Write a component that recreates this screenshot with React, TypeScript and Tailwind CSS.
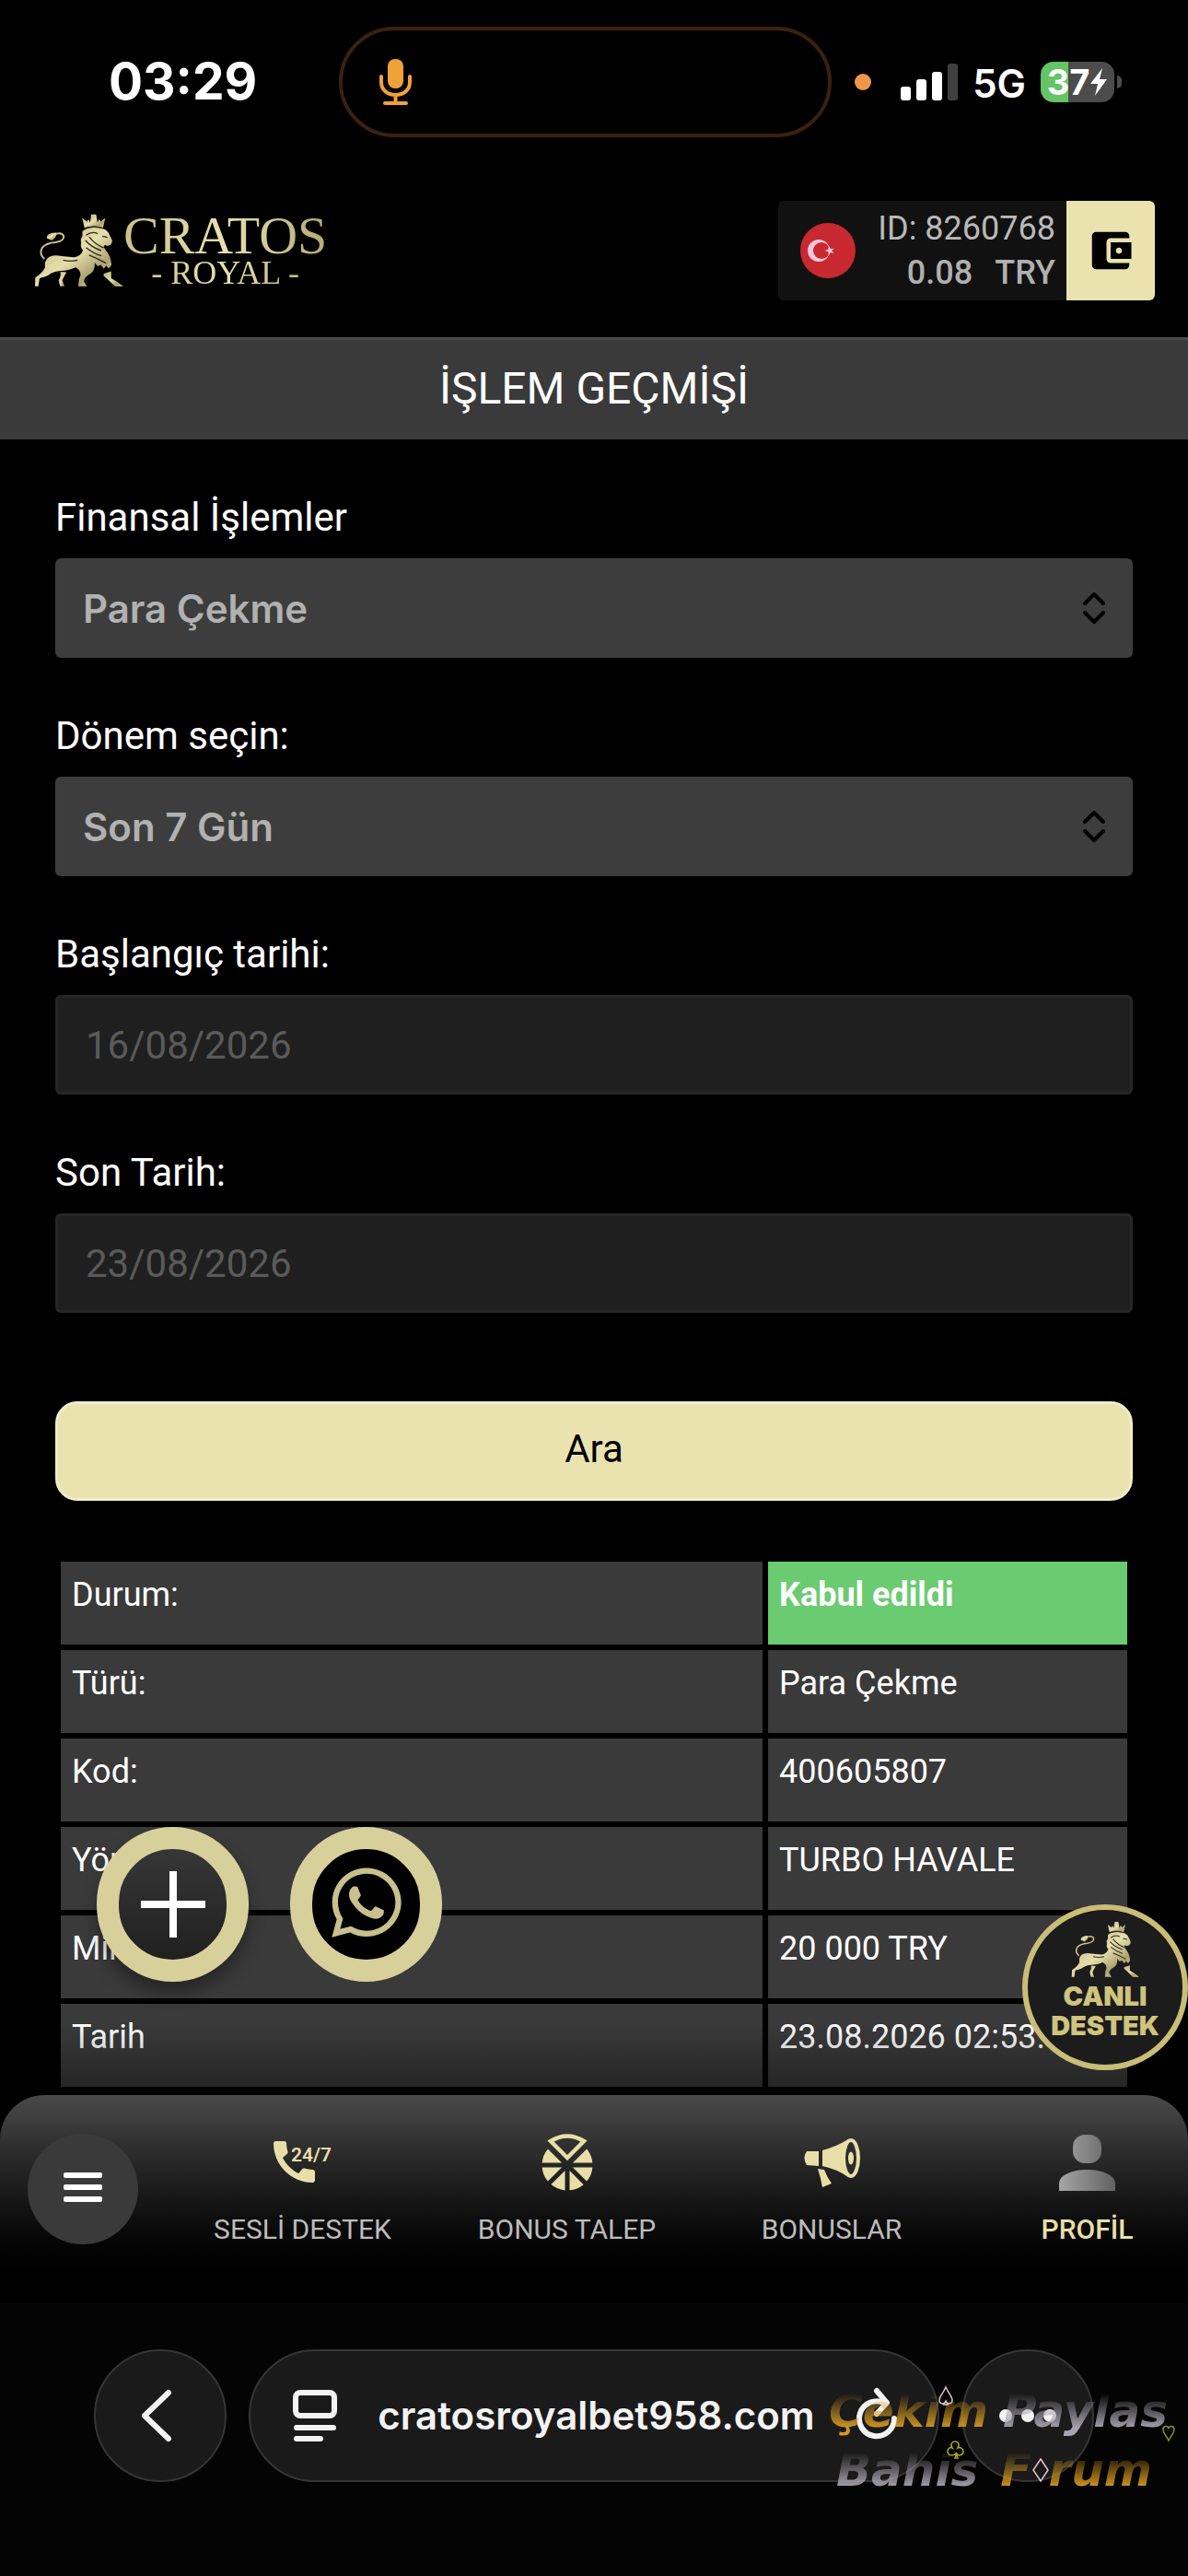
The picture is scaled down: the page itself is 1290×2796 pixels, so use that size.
import React, { useState } from 'react';
import { FaWhatsapp } from 'react-icons/fa';
import { MdAccountBalanceWallet } from 'react-icons/md';

const rows = [
  { label: 'Durum:', value: 'Kabul edildi', accepted: true },
  { label: 'Türü:', value: 'Para Çekme' },
  { label: 'Kod:', value: '400605807' },
  { label: 'Yöntem:', value: 'TURBO HAVALE' },
  { label: 'Miktar:', value: '20 000 TRY' },
  { label: 'Tarih', value: '23.08.2026 02:53.12' },
];

function Lion({ className, id }: { className: string; id: string }) {
  return (
    <svg viewBox="110 95 292 240" className={className} aria-hidden="true">
      <defs>
        <linearGradient id={id} x1="0" y1="0" x2="1" y2="1">
          <stop offset="0" stopColor="#b9b07c" />
          <stop offset="0.5" stopColor="#e6deab" />
          <stop offset="0.75" stopColor="#aba26f" />
          <stop offset="1" stopColor="#e9e1ae" />
        </linearGradient>
      </defs>
      <g fill={`url(#${id})`}>
        <path d="M275 141L267 108L283 120L288 113L293 123L297 97H313L317 123L323 112L328 120L343 108L335 141Q305 130 275 141Z" />
        <path d="M268 152Q285 138 312 140Q340 140 352 155L364 178Q368 186 360 196Q350 202 342 197Q333 199 345 215Q361 232 363 262L354 274L346 264L338 274L328 262L318 266L308 254Q311 280 292 292Q274 302 273 316L283 332H255Q254 310 262 295Q262 278 246 270Q222 281 197 281Q180 281 166 289Q150 302 128 305L124 332H113L114 303Q138 288 146 270Q142 246 160 235Q178 228 200 233L240 237Q262 234 270 214Q260 205 264 190Q260 178 268 168Z" />
        <path d="M196 284L216 286Q206 302 202 312L209 332H195L190 312Q199 298 196 284Z" />
        <path d="M338 290L362 283L362 305Q386 318 401 332H374Q357 314 337 297Z" />
        <path d="M151 174Q152 156 182 156Q188 168 168 182Q158 176 151 174Z" />
      </g>
      <path d="M144 242Q125 226 137 205Q150 190 180 188Q208 184 207 168Q202 155 182 160" fill="none" stroke="#c9c08c" strokeWidth="6" />
      <path d="M275 142Q305 134 335 142M280 165Q300 150 318 160M278 182Q298 205 330 215M290 170Q310 195 338 206M280 205Q305 225 330 232M290 230Q315 240 345 256M333 168L350 172M205 246Q230 252 252 246" fill="none" stroke="#2c2a1c" strokeWidth="4" />
    </svg>
  );
}

function StatusBar() {
  return (
    <div className="relative flex h-[178px] items-start justify-between pr-[72px] pl-[118px] text-white">
      <span className="pt-[56px] font-[Inter] text-[55px] leading-[64px] font-bold">03:29</span>
      <div className="absolute inset-x-0 top-[29px] mx-auto flex h-[120px] w-[535px] -translate-x-[10px] items-center rounded-full border-4 border-[#3a210e] pl-10">
        <svg viewBox="0 0 35 50" className="h-[50px] w-[35px]" fill="none" stroke="#f0a23a" strokeWidth="4" aria-hidden="true">
          <rect x="9" y="0" width="17" height="32" rx="8" fill="#f0a23a" stroke="none" />
          <path d="M2 19v6c0 9 7 14 15.500 14S33 34 33 25v-6M17.500 39v9M6 48h23" strokeLinecap="round" />
        </svg>
      </div>
      <div className="flex items-center pt-[65px]">
        <span className="mr-8 size-[18px] rounded-full bg-[#ef9748]" />
        <svg viewBox="0 0 62 40" className="mr-4 h-10 w-[62px]" fill="#fff" aria-hidden="true">
          <rect x="0" y="25" width="11" height="15" rx="3" />
          <rect x="17" y="17" width="11" height="23" rx="3" />
          <rect x="34" y="9" width="11" height="31" rx="3" />
          <rect x="51" y="0" width="11" height="40" rx="3" fill="#3f3f3f" />
        </svg>
        <span className="mr-4 pt-1 font-[Inter] text-[42px] leading-[44px] font-semibold">5G</span>
        <span className="flex h-11 w-20 items-center justify-center rounded-[14px] bg-linear-to-r from-[#65c466] from-37% to-[#4c4c4c] to-37% font-[Inter] text-[38px] leading-[44px] font-bold">
          37
          <svg viewBox="0 0 20 30" className="h-[30px] w-[20px]" fill="#fff" aria-hidden="true">
            <path d="M14 0L1 17h8L6 30L19 12h-8z" />
          </svg>
        </span>
        <span className="ml-[3px] h-[14px] w-[5px] rounded-r-full bg-[#4c4c4c]" />
      </div>
    </div>
  );
}

function Header() {
  return (
    <header className="flex items-center justify-between py-10 pr-9 pl-[37px]">
      <a href="#" className="flex items-center" aria-label="Cratos Royal">
        <Lion className="h-20 w-[97px]" id="lionHead" />
        <span className="flex flex-col items-center bg-linear-to-r from-[#c9c08c] via-[#e9e1ae] to-[#b3a974] bg-clip-text font-['Liberation_Serif'] text-transparent">
          <span className="text-[58px] leading-[48px]">CRATOS</span>
          <span className="text-[36px] leading-[32px]">- ROYAL -</span>
        </span>
      </a>
      <div className="flex h-[108px] overflow-hidden rounded-md bg-[#111]">
        <div className="flex items-center pl-6">
          <svg viewBox="0 0 60 60" className="size-[60px]" aria-hidden="true">
            <circle cx="30" cy="30" r="30" fill="#c8282f" />
            <circle cx="20" cy="30" r="12" fill="#f3c6dc" />
            <circle cx="23" cy="30" r="9" fill="#c8282f" />
            <path d="M26 30l4-1 1-4 2 3 4 0-3 2 3 3-4-1-2 3-1-4z" fill="#f3c6dc" />
          </svg>
        </div>
        <div className="pt-[6px] pr-3 pl-6 text-right text-[36px] leading-[48px] text-[#b9b9b9]">
          <p>ID: 8260768</p>
          <p className="font-medium text-[#b0b0b0]">
            0.08<span className="ml-6">TRY</span>
          </p>
        </div>
        <button className="flex w-24 items-center justify-center bg-[#eae3b0] text-black" aria-label="Cüzdan">
          <MdAccountBalanceWallet size={54} />
        </button>
      </div>
    </header>
  );
}

function SelectField({ id, label, options }: { id: string; label: string; options: string[] }) {
  const [value, setValue] = useState(options[0]);
  return (
    <div>
      <label htmlFor={id} className="mb-[19px] block text-[42px] leading-[50px] text-white">{label}</label>
      <div className="relative">
        <select
          id={id}
          value={value}
          onChange={e => setValue(e.target.value)}
          className="h-[108px] w-full appearance-none rounded-md bg-[#3d3d3d] px-[30px] font-[Inter] text-[42px] font-semibold text-[#b1b1b1]"
        >
          {options.map(o => <option key={o}>{o}</option>)}
        </select>
        <svg viewBox="0 0 24 34" className="pointer-events-none absolute top-[37px] right-[30px] h-[34px] w-6" fill="none" stroke="#000" strokeWidth="4" strokeLinecap="round" strokeLinejoin="round" aria-hidden="true">
          <path d="M2 12L12 2L22 12M2 22L12 32L22 22" />
        </svg>
      </div>
    </div>
  );
}

function DateField({ id, label, value }: { id: string; label: string; value: string }) {
  return (
    <div>
      <label htmlFor={id} className="mb-[19px] block text-[42px] leading-[50px] text-white">{label}</label>
      <input
        id={id}
        type="text"
        defaultValue={value}
        className="block h-[108px] w-full rounded-md border-3 border-[#272727] bg-[#1f1f1f] px-[30px] text-[42px] text-[#5a5a5a]"
      />
    </div>
  );
}

function NavItem({ label, active, className = '', children }: { label: string; active?: boolean; className?: string; children: React.ReactNode }) {
  return (
    <a href="#" className={`flex flex-col items-center ${className}`}>
      <span className="mb-6 flex h-[62px] items-center justify-center">{children}</span>
      <span className={`text-[30px] leading-[36px] whitespace-nowrap ${active ? 'font-medium text-[#e8dfa8]' : 'text-[#bcbcbc]'}`}>{label}</span>
    </a>
  );
}

function BottomNav() {
  return (
    <nav className="flex h-[226px] items-start rounded-t-[48px] bg-linear-to-b from-[#494949] to-black pt-[42px]">
      <button className="mr-[35px] ml-[30px] flex size-[120px] shrink-0 items-center justify-center rounded-full bg-[#3a3a3a]" aria-label="Menü">
        <svg viewBox="0 0 42 32" className="mb-1 h-8 w-[42px]" fill="#fff" aria-hidden="true">
          <rect width="42" height="6" rx="2" />
          <rect y="13" width="42" height="6" rx="2" />
          <rect y="26" width="42" height="6" rx="2" />
        </svg>
      </button>
      <div className="grid flex-1 grid-cols-[287fr_287fr_288fr_243fr]">
        <NavItem label="SESLİ DESTEK">
          <svg viewBox="0 0 64 46" className="h-[46px] w-16" fill="#e8dfa8" aria-hidden="true">
            <path transform="translate(-7.500 -7.500) scale(2.500)" d="M20.010 15.380c-1.230 0-2.420-.2-3.530-.560-.350-.120-.740-.030-1.010.240l-1.570 1.970c-2.830-1.350-5.480-3.900-6.890-6.830l1.950-1.660c.270-.280.350-.670.240-1.020-.370-1.110-.560-2.300-.560-3.530 0-.540-.450-.990-.990-.990H4.190C3.650 3 3 3.240 3 3.990 3 13.280 10.730 21 20.010 21c.710 0 .990-.630.990-1.180v-3.450c0-.540-.450-.990-.990-.990z" />
            <text x="19" y="22" fontFamily="Roboto" fontSize="21" fontWeight="600">24/7</text>
          </svg>
        </NavItem>
        <NavItem label="BONUS TALEP">
          <svg viewBox="-28 -34 56 62" className="h-[62px] w-[56px]" fill="#e8dfa8" aria-hidden="true">
            {[0, 45, 90, 135, 180, -45].map(a => (
              <path key={a} transform={`rotate(${a})`} d="M6 2.500H27.400A27.500 27.500 0 0 1 21.100 17.600Z" />
            ))}
            <path d="M0 -8L-18 -26Q0 -37 18 -26Z" fill="none" stroke="#e8dfa8" strokeWidth="4.500" />
          </svg>
        </NavItem>
        <NavItem label="BONUSLAR">
          <svg viewBox="0 0 61 53" className="h-[53px] w-[61px]" fill="#e8dfa8" aria-hidden="true">
            <path d="M3 14H16V30L3 29Q-2 21 3 14Z" />
            <path d="M20 13Q35 9 48 1V42Q35 33 20 30Z" />
            <path d="M15 33L22 34Q25 42 30 49L20 53Q18 42 15 33Z" />
            <ellipse cx="51" cy="21.500" rx="8" ry="19.500" fill="#2d2d2d" stroke="#e8dfa8" strokeWidth="4" />
            <ellipse cx="51" cy="21.500" rx="3" ry="7" />
          </svg>
        </NavItem>
        <NavItem label="PROFİL" active className="pl-6">
          <svg viewBox="0 0 61 61" className="size-[61px]" aria-hidden="true">
            <defs>
              <linearGradient id="person" x1="0" y1="0" x2="61" y2="0" gradientUnits="userSpaceOnUse">
                <stop offset="0" stopColor="#a5a5a5" />
                <stop offset="1" stopColor="#616161" />
              </linearGradient>
            </defs>
            <rect x="15" y="0" width="31" height="31" rx="13" fill="url(#person)" />
            <path d="M0 61V53C0 44 14 38 30.500 38S61 44 61 53V61Z" fill="url(#person)" />
          </svg>
        </NavItem>
      </div>
    </nav>
  );
}

function FloatingButtons() {
  return (
    <>
      <div className="absolute -top-[291px] left-[105px] flex gap-[45px]">
        <button className="flex h-[168px] w-[165px] items-center justify-center rounded-full border-[24px] border-[#d7d09b] bg-linear-to-b from-[#3b3b3b] to-[#1c1c1c] bg-origin-border shadow-[0_12px_18px_rgba(0,0,0,0.35)]" aria-label="Ekle">
          <svg viewBox="0 0 70 72" className="h-[72px] w-[70px] shrink-0" fill="#fff" aria-hidden="true">
            <path d="M31 0h8v32h31v8H39v32h-8V40H0v-8h31z" />
          </svg>
        </button>
        <a href="#" className="flex h-[168px] w-[165px] items-center justify-center rounded-full border-[24px] border-[#d7d09b] bg-black" aria-label="WhatsApp">
          <FaWhatsapp className="mb-1 h-[86px] w-[76px] shrink-0 text-[#c8c08d]" />
        </a>
      </div>
      <button className="absolute -top-[207px] right-0 flex size-[180px] flex-col items-center rounded-full border-6 border-[#c9bd78] bg-[#1c1c1c] pt-3 font-[Inter] text-[29px] leading-8 font-black text-[#cfc47e]">
        <Lion className="mb-1 h-[62px] w-[74px] shrink-0" id="lionSupport" />
        <span>CANLI</span>
        <span>DESTEK</span>
      </button>
    </>
  );
}

function Watermark() {
  return (
    <div className="pointer-events-none absolute top-[311px] right-0 w-[390px] font-['DejaVu_Sans'] text-[50px] leading-[64px] font-bold italic">
      <div className="flex gap-4 whitespace-nowrap">
        <span className="bg-linear-to-b from-[#c08a1e]/0 from-20% to-[#d59a22] to-80% bg-clip-text text-transparent">Çekim</span>
        <span className="bg-linear-to-b from-[#a9a5b0]/0 from-20% to-[#a9a5b0] to-80% bg-clip-text text-transparent">Paylas</span>
      </div>
      <div className="flex gap-6 whitespace-nowrap pl-2">
        <span className="bg-linear-to-b from-[#a9a5b0]/0 from-20% to-[#a9a5b0] to-80% bg-clip-text text-transparent">Bahis</span>
        <span className="flex items-center">
          <span className="bg-linear-to-b from-[#c08a1e]/0 from-20% to-[#d59a22] to-80% bg-clip-text text-transparent">F</span>
          <svg viewBox="0 0 18 26" className="h-[26px] w-[18px]" fill="none" stroke="#e3c9cf" strokeWidth="1.500" aria-hidden="true">
            <path d="M9 1L17 13L9 25L1 13Z" />
          </svg>
          <span className="bg-linear-to-b from-[#c08a1e]/0 from-20% to-[#d59a22] to-80% bg-clip-text text-transparent">rum</span>
        </span>
      </div>
      <svg viewBox="0 0 390 90" className="absolute top-0 left-0 h-[90px] w-[390px]" fill="none" strokeWidth="1.500" aria-hidden="true">
        <path d="M127 6C124 13 120 16 120 20C120 25 126 25 127 21C128 25 134 25 134 20C134 16 130 13 127 6ZM127 21L125 25H129Z" stroke="#d9c3c9" />
        <path d="M137 83L139 77C135 82 129 80 129 76C129 72 132 71 134 72C131 67 135 65 137 65S143 67 140 72C142 71 146 72 146 76C146 80 140 82 138 77L140 83Z" stroke="#a9a91c" />
        <path d="M369 64C366 58 363 56 363 52C363 48 368 47 369 51C370 47 375 48 375 52C375 56 372 58 369 64Z" stroke="#8d8d18" />
      </svg>
    </div>
  );
}

function BrowserBar() {
  return (
    <div className="flex h-[296px] items-start bg-[#040404] pt-[50px] pr-[102px] pl-[102px] text-[#f3f3f3]">
      <button className="mr-6 flex size-36 shrink-0 items-center justify-center rounded-full border-2 border-[#353535] bg-[#1a1a1a]" aria-label="Geri">
        <svg viewBox="0 0 34 58" className="mr-2 h-[58px] w-[34px]" fill="none" stroke="currentColor" strokeWidth="6" strokeLinecap="round" strokeLinejoin="round" aria-hidden="true">
          <path d="M30 4L4 29L30 54" />
        </svg>
      </button>
      <div className="mr-6 flex h-36 flex-1 items-center rounded-full border-2 border-[#353535] bg-[#1a1a1a] pr-[43px] pl-[46px]">
        <svg viewBox="0 0 48 56" className="h-14 w-12 shrink-0" fill="none" stroke="currentColor" strokeWidth="6" strokeLinecap="round" aria-hidden="true">
          <rect x="3" y="3" width="42" height="25" rx="5" />
          <path d="M4 41H44M4 53H30" />
        </svg>
        <span className="flex-1 text-center font-[Inter] text-[42px] leading-[48px] font-semibold">cratosroyalbet958.com</span>
        <button aria-label="Yenile">
          <svg viewBox="0 0 46 58" className="mb-1 h-[58px] w-[46px]" fill="none" stroke="currentColor" strokeWidth="6" strokeLinecap="round" strokeLinejoin="round" aria-hidden="true">
            <path d="M42 34A19 19 0 1 1 32 17.500M23 4L34 17L23 29" />
          </svg>
        </button>
      </div>
      <button className="flex size-36 shrink-0 items-center justify-center gap-[10px] rounded-full border-2 border-[#353535] bg-[#1a1a1a]" aria-label="Diğer">
        <span className="size-[14px] rounded-full bg-[#f3f3f3]" />
        <span className="size-[14px] rounded-full bg-[#f3f3f3]" />
        <span className="size-[14px] rounded-full bg-[#f3f3f3]" />
      </button>
    </div>
  );
}

export default function App() {
  return (
    <div className="flex min-h-screen w-full flex-col bg-black font-[Roboto]">
      <StatusBar />
      <Header />
      <h1 className="h-[111px] border-t-3 border-[#4a4a4a] bg-[#3a3a3a] text-center text-[48px] leading-[106px] text-white">İŞLEM GEÇMİŞİ</h1>

      <main className="px-[60px] pt-[60px]">
        <form className="flex flex-col gap-[60px]" onSubmit={e => e.preventDefault()}>
          <SelectField id="type" label="Finansal İşlemler" options={['Para Çekme', 'Para Yatırma']} />
          <SelectField id="period" label="Dönem seçin:" options={['Son 7 Gün', 'Son 30 Gün']} />
          <DateField id="start" label="Başlangıç tarihi:" value="16/08/2026" />
          <DateField id="end" label="Son Tarih:" value="23/08/2026" />
          <button type="submit" className="mt-9 h-[108px] rounded-3xl border-3 border-[#f0ebc9] bg-[#eae3b0] pb-1 text-[42px] leading-[48px] text-black">Ara</button>
        </form>

        <table className="mt-[60px] w-full table-fixed border-separate border-spacing-[6px] text-left text-[36px] leading-[42px] text-white">
          <colgroup>
            <col />
            <col className="w-[390px]" />
          </colgroup>
          <tbody>
            {rows.map(row => (
              <tr key={row.label} className="h-[90px] align-top">
                <th scope="row" className="bg-[#3a3a3a] px-3 pt-[15px] font-normal">{row.label}</th>
                <td className={`truncate px-3 pt-[15px] ${row.accepted ? 'bg-[#6acb70] font-bold' : 'bg-[#3a3a3a]'}`}>{row.value}</td>
              </tr>
            ))}
          </tbody>
        </table>
      </main>

      <footer className="relative mt-auto">
        <div className="pointer-events-none absolute bottom-full h-20 w-full bg-linear-to-b from-black/0 to-black/40" />
        <BottomNav />
        <BrowserBar />
        <FloatingButtons />
        <Watermark />
      </footer>
    </div>
  );
}
